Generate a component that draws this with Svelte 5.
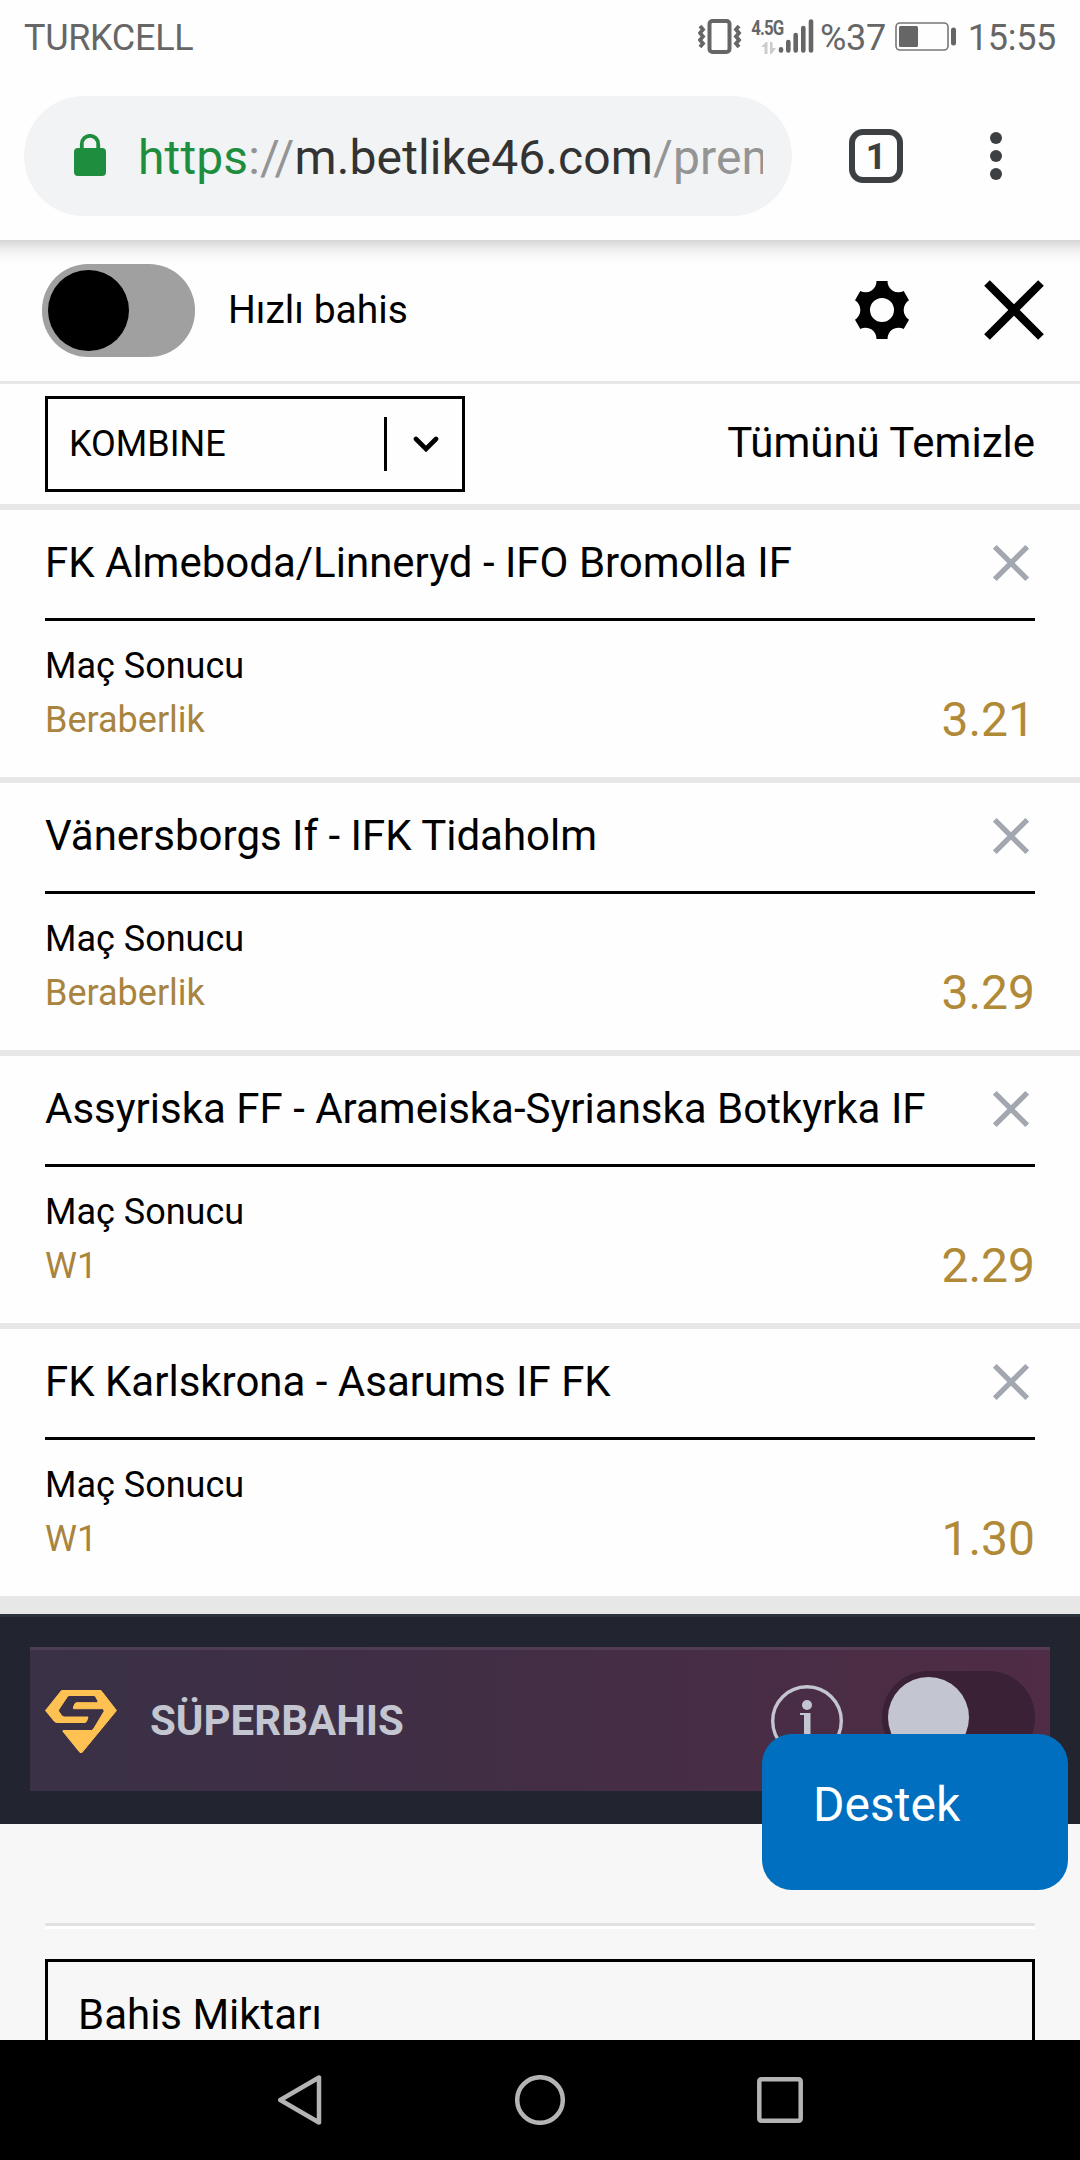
<script>
  const bets = [
    { match: 'FK Almeboda/Linneryd - IFO Bromolla IF', pick: 'Beraberlik', odds: '3.21' },
    { match: 'Vänersborgs If - IFK Tidaholm', pick: 'Beraberlik', odds: '3.29' },
    { match: 'Assyriska FF - Arameiska-Syrianska Botkyrka IF', pick: 'W1', odds: '2.29' },
    { match: 'FK Karlskrona - Asarums IF FK', pick: 'W1', odds: '1.30' }
  ];
</script>

<div class="screen">
  <header class="status">
    <span class="carrier">TURKCELL</span>
    <svg class="vibrate" width="44" height="36" viewBox="0 0 44 36" fill="none" stroke="#666">
      <rect x="11.500" y="2" width="20" height="31" rx="3" stroke-width="4" />
      <path d="M2 7l3 3.500-3 3.500 3 3.500-3 3.500 3 3.500-3 3.500M41 7l-3 3.500 3 3.500-3 3.500 3 3.500-3 3.500 3 3.500" stroke-width="3.800" />
    </svg>
    <span class="network">
      <span class="gen">4.5G</span>
      <svg class="arrows" width="15" height="12" viewBox="0 0 15 12" fill="#ccc">
        <path d="M0 5l5-5h1.500v12H3.500V5zM9 0h2.500v6H15l-4.500 6H9z" />
      </svg>
    </span>
    <svg class="signal" width="36" height="36" viewBox="0 0 36 36" stroke="#666" stroke-width="4.600" stroke-linecap="round">
      <path d="M3 30.300v1.200M10.300 23v8.500M17.700 16v15.500M25.300 9v22.500M33 2.500v29" />
    </svg>
    <span class="percent">%37</span>
    <svg class="battery" width="62" height="30" viewBox="0 0 62 30">
      <rect x="1" y="1" width="52" height="27" rx="4" fill="none" stroke="#777" stroke-width="1.600" />
      <rect x="4" y="4" width="19" height="21" rx="1.500" fill="#666" />
      <rect x="56" y="5.500" width="5" height="18" rx="2.500" fill="#666" />
    </svg>
    <span class="clock">15:55</span>
  </header>

  <div class="browser">
    <div class="address">
      <svg class="lock" width="32" height="42" viewBox="0 0 32 42">
        <rect x="0" y="14" width="32" height="28" rx="4" fill="#1e8e3e" />
        <path d="M7.800 16v-6a8.200 8.200 0 0 1 16.400 0v6" fill="none" stroke="#1e8e3e" stroke-width="3.800" />
      </svg>
      <div class="url"><span class="scheme">https</span><span class="dim">://</span>m.betlike46.com<span class="dim">/pren</span></div>
    </div>
    <div class="tabs">1</div>
    <svg class="dots" width="12" height="48" viewBox="0 0 12 48" fill="#3c4043">
      <circle cx="6" cy="6" r="6" /><circle cx="6" cy="24" r="6" /><circle cx="6" cy="42" r="6" />
    </svg>
  </div>

  <main>
    <section class="quick">
      <div class="toggle"><span class="knob"></span></div>
      <span class="quick-label">Hızlı bahis</span>
      <svg class="gear" width="54" height="58" viewBox="0 0 54 58">
        <path fill-rule="evenodd" d="M21.500 0H32.500A11 11 0 0 0 48.700 10L54 19.300A11.500 11.500 0 0 0 54 38.700L48.700 48A11 11 0 0 0 32.500 58H21.500A11 11 0 0 0 5.300 48L0 38.700A11.500 11.500 0 0 0 0 19.300L5.300 10A11 11 0 0 0 21.500 0ZM27 17a12 12 0 1 0 0 24a12 12 0 0 0 0-24Z" />
      </svg>
      <svg class="close" width="60" height="60" viewBox="0 0 60 60" stroke="#000" stroke-width="8">
        <path d="M3 3L57 57M57 3L3 57" />
      </svg>
    </section>

    <section class="mode">
      <div class="select">
        <span class="select-value">KOMBINE</span>
        <span class="divider"></span>
        <svg width="26" height="16" viewBox="0 0 26 16" fill="none" stroke="#000" stroke-width="4.600" stroke-linecap="round">
          <path d="M3 3L13 13L23 3" />
        </svg>
      </div>
      <span class="clear">Tümünü Temizle</span>
    </section>

    {#each bets as bet}
      <article class="bet">
        <div class="bet-head">
          <span class="match">{bet.match}</span>
          <svg width="36" height="36" viewBox="0 0 36 36" stroke="#a2a7b0" stroke-width="5.200">
            <path d="M1.800 1.800L34.200 34.200M34.200 1.800L1.800 34.200" />
          </svg>
        </div>
        <div class="bet-body">
          <div class="lines">
            <span>Maç Sonucu</span>
            <span class="pick">{bet.pick}</span>
          </div>
          <span class="odds">{bet.odds}</span>
        </div>
      </article>
    {/each}

    <section class="super-wrap">
      <div class="super">
        <svg class="logo" width="72" height="64" viewBox="0 0 72 64">
          <path fill="#ffc252" stroke="#ffc252" stroke-width="1" stroke-linejoin="round" d="M16.500 .5H56L71.500 20.500L37 62.500H35L18 41.500V40.500H46.500L48.500 39L59 21.500V20L57.500 18.700H28.500V17L30 13.500L31.500 12.700H52.500L53 11L50.500 6.500L49 5.500H24L22.500 6.500L13.800 19.500V21.500L17 26L19 27H43L41.500 31.500L40 32.500H11.500L9.500 31.500L.5 20.500Z" />
        </svg>
        <span class="super-label">SÜPERBAHIS</span>
        <svg class="info" width="72" height="72" viewBox="0 0 72 72">
          <circle cx="36" cy="36" r="34.300" fill="none" stroke="#c3c6d0" stroke-width="3.400" />
          <circle cx="36" cy="20" r="5" fill="#c3c6d0" />
          <path d="M29 28h10.500v25h4v2H29v-2h4V30h-4z" fill="#c3c6d0" />
        </svg>
        <div class="toggle dark"><span class="knob"></span></div>
      </div>
      <div class="support">Destek</div>
    </section>

    <section class="stake">
      <hr />
      <div class="amount">Bahis Miktarı</div>
    </section>
  </main>

  <nav>
    <svg width="44" height="50" viewBox="0 0 44 50" fill="none" stroke="#b4b4b4" stroke-width="4.500" stroke-linejoin="round">
      <path d="M2.300 25L41 2.500V47.500Z" />
    </svg>
    <svg width="50" height="50" viewBox="0 0 50 50" fill="none" stroke="#b4b4b4" stroke-width="4.500">
      <circle cx="25" cy="25" r="22.800" />
    </svg>
    <svg width="46" height="46" viewBox="0 0 46 46" fill="none" stroke="#b4b4b4" stroke-width="4.500">
      <rect x="2.300" y="2.300" width="41.400" height="41.400" rx="2" />
    </svg>
  </nav>
</div>

<style>
  :global(body) { background: #fff; }
  .screen {
    width: 1080px;
    height: 2160px;
    display: flex;
    flex-direction: column;
    overflow: hidden;
    background: #fefefe;
    color: #000;
    font-family: Roboto, sans-serif;
    white-space: nowrap;
  }
  svg { display: block; flex: none; }
  section, article, .bet-head, .toggle, .super, .select, .amount, hr { box-sizing: border-box; }

  .status {
    height: 74px;
    flex: none;
    display: flex;
    align-items: center;
    padding: 0 24px;
    color: #666;
    font-size: 36px;
    line-height: 76px;
    letter-spacing: -0.3px;
  }
  .carrier, .clock, .percent { padding-top: 1px; }
  .vibrate { margin-left: auto; margin-right: 6px; }
  .network {
    display: flex;
    flex-direction: column;
    align-items: flex-end;
    width: 34px;
    height: 36px;
    gap: 5px;
    margin-right: -4px;
  }
  .gen {
    font-size: 20px;
    line-height: 18px;
    font-weight: 700;
    letter-spacing: -1px;
    margin-right: -1px;
    transform: scaleX(0.84);
    transform-origin: right;
  }
  .arrows { margin-right: 6px; }
  .percent { margin-left: 6px; }
  .battery { margin: 0 11px 0 9px; }

  .browser {
    height: 166px;
    flex: none;
    display: flex;
    align-items: flex-start;
    box-sizing: border-box;
    padding: 22px 24px 0;
    background: #fefefe;
    position: relative;
  }
  .browser::after {
    content: "";
    position: absolute;
    left: 0;
    right: 0;
    top: 100%;
    height: 24px;
    background: linear-gradient(rgba(0, 0, 0, 0.16), rgba(0, 0, 0, 0.07) 35%, rgba(0, 0, 0, 0.02) 70%, transparent);
  }
  .address {
    width: 768px;
    height: 120px;
    box-sizing: border-box;
    border-radius: 60px;
    background: #f1f3f4;
    display: flex;
    align-items: center;
    padding: 0 29px 0 50px;
  }
  .lock { margin-right: 32px; margin-bottom: 2px; }
  .url {
    flex: 1;
    overflow: hidden;
    font-size: 48px;
    line-height: 64px;
    letter-spacing: 0.12px;
    color: #333;
    margin-top: 3px;
  }
  .scheme { color: #1e8e3e; }
  .dim { color: #949494; }
  .tabs {
    width: 54px;
    height: 54px;
    box-sizing: border-box;
    margin: 33px 0 0 57px;
    border: 6px solid #3c4043;
    border-radius: 14px;
    color: #3c4043;
    font-size: 36px;
    font-weight: 700;
    line-height: 45px;
    text-align: center;
  }
  .dots { margin: 36px 0 0 87px; }

  main { height: 1800px; flex: none; overflow: hidden; }
  .quick {
    height: 144px;
    border-bottom: 3px solid #e7e7e7;
    display: flex;
    align-items: center;
    padding: 0 36px 0 42px;
  }
  .toggle {
    width: 153px;
    height: 93px;
    border-radius: 46px;
    background: #a0a0a0;
    padding: 6px;
    flex: none;
  }
  .knob {
    display: block;
    width: 81px;
    height: 81px;
    border-radius: 50%;
    background: #000;
  }
  .quick-label { margin-left: 33px; font-size: 39px; line-height: 50px; margin-top: -1px; }
  .gear { margin-left: auto; margin-right: 75px; margin-bottom: 2px; }
  .close { margin-bottom: 2px; }

  .mode {
    height: 126px;
    border-bottom: 6px solid #e7e7e7;
    display: flex;
    align-items: center;
    justify-content: space-between;
    padding: 0 45px;
  }
  .select {
    width: 420px;
    height: 96px;
    border: 3px solid #000;
    display: flex;
    align-items: center;
    padding: 0 23px 0 21px;
  }
  .select-value { flex: 1; font-size: 36px; }
  .divider { width: 3px; height: 54px; background: #000; margin-right: 26px; }
  .clear { font-size: 42px; line-height: 54px; margin-top: -2px; }

  .bet {
    height: 273px;
    padding: 0 45px;
    border-bottom: 6px solid #e7e7e7;
  }
  .bet:last-of-type { height: 285px; border-bottom-width: 18px; }
  .bet-head {
    height: 111px;
    border-bottom: 3px solid #000;
    display: flex;
    align-items: center;
    justify-content: space-between;
    padding: 0 6px 3px 0;
  }
  .match { font-size: 42px; }
  .bet-body { display: flex; justify-content: space-between; }
  .lines {
    display: flex;
    flex-direction: column;
    font-size: 36px;
    line-height: 54px;
    padding-top: 18px;
  }
  .pick { color: #a8843f; }
  .odds { color: #b18a38; font-size: 48px; line-height: 60px; padding-top: 69px; }

  .super-wrap {
    height: 210px;
    padding: 30px 30px 33px;
    border-top: 3px solid #2a333c;
    background: #222530;
    position: relative;
  }
  .super {
    height: 144px;
    border-top: 3px solid rgba(90, 70, 95, 0.6);
    background: linear-gradient(90deg, #3a3146, #402e45 40%, #502c46);
    display: flex;
    align-items: flex-start;
    padding: 0 15px;
  }
  .logo { margin-top: 40px; }
  .super-label {
    color: #c3c6d0;
    font-size: 42px;
    font-weight: 700;
    line-height: 54px;
    margin: 44px auto 0 33px;
  }
  .info { margin: 35px 39px 0 0; }
  .dark { background: #3b2135; margin-top: 21px; }
  .dark .knob { background: #c3c6d0; }
  .support {
    position: absolute;
    left: 762px;
    top: 117px;
    width: 306px;
    height: 156px;
    box-sizing: border-box;
    padding-left: 51px;
    border-radius: 30px;
    background: #006fbf;
    color: #fff;
    font-size: 48px;
    line-height: 142px;
  }

  .stake { height: 216px; background: #f7f7f7; padding: 99px 45px 0; }
  hr {
    margin: 0 0 30px;
    height: 6px;
    border: 0;
    border-top: 3px solid #e2e2e2;
    border-bottom: 3px solid #fff;
  }
  .amount {
    height: 120px;
    border: 3px solid #000;
    padding: 26px 30px;
    font-size: 42px;
    line-height: 54px;
  }

  nav {
    position: relative;
    height: 120px;
    flex: none;
    background: #000;
    display: flex;
    align-items: center;
    justify-content: space-between;
    padding: 0 277px 0 278px;
  }
</style>
